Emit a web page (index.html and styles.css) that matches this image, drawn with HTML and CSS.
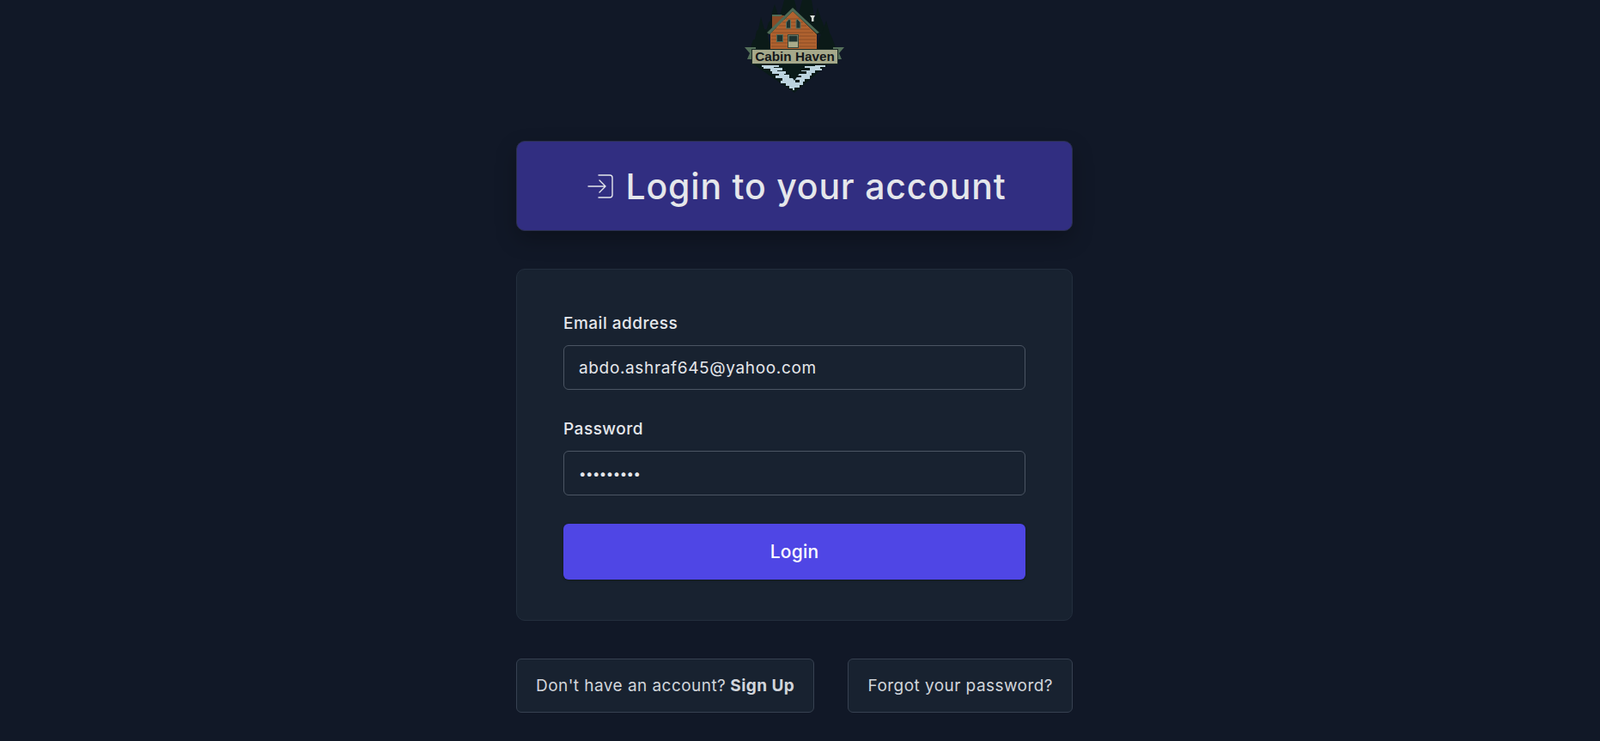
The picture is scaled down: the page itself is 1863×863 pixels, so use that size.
FILE: index.html
```html
<!DOCTYPE html>
<html lang="en">
<head>
    <meta charset="UTF-8">
    <meta name="viewport" content="width=device-width, initial-scale=1.0">
    <title>Login</title>
    <link rel="stylesheet" href="styles.css">
</head>
<body>
    <div class="page">
        <!-- Logo -->
        <svg class="logo" viewBox="0 0 120 108" role="img" aria-label="Cabin Haven logo">
            <!-- pine trees -->
            <g fill="#0b1a18">
                <path d="M8 58 L12 46 L14 46 L16 36 L18 34 L21 20 L25 34 L27 34 L30 46 L34 58 Z"/>
                <path d="M26 40 L30 26 L32 24 L34 14 L37 5 L40 14 L42 24 L46 40 Z"/>
                <path d="M40 30 L44 14 L46 8 L48 0 L60 0 L62 8 L64 30 Z"/>
                <path d="M64 30 L66 12 L69 0 L80 0 L82 12 L84 30 Z"/>
                <path d="M78 40 L82 24 L84 20 L87 9 L91 22 L93 26 L97 40 Z"/>
                <path d="M84 58 L90 42 L92 38 L97 24 L101 38 L103 42 L109 58 Z"/>
            </g>
            <!-- water diamond -->
            <path d="M11 74 L100 74 L60 108 Z" fill="#0a1a18"/>
            <g fill="#bcd3de">
                <path d="M22 76 H42 V78 H36 V79 H46 V82 H40 V83 H50 V86 H48 V87 H54 V91 H61 V96 H66 V93 H61 V90 H68 V88 H64 V86 H74 V83 H68 V82 H78 V79 H72 V77 H84 V76 H96 V78 H90 V80 H92 V82 H84 V85 H80 V88 H78 V92 H72 V95 H70 V99 H66 V102 H60 V105 H58 V103 H54 V100 H50 V97 H44 V94 H46 V91 H38 V88 H42 V86 H34 V83 H32 V80 H24 V78 H22 Z"/>
            </g>
            <path d="M47 75 H73 L60 94 Z" fill="#0a1a18"/>
            <!-- banner tails -->
            <path d="M2 55 H15 V69 H5 L8 62 Z M118 55 H105 V69 H115 L112 62 Z" fill="#55705a"/>
            <!-- cabin -->
            <path d="M34 18 H48 V32 H34 Z" fill="#8a4a26"/>
            <path d="M58 13 L86 40 V58 H32 V39 Z" fill="#b0622f"/>
            <g stroke="#8a4c27" stroke-width="1">
                <path d="M50 22 H66 M46 26 H70 M42 30 H74 M38 34 H78 M34 38 H82 M33 42 H85 M33 46 H85 M33 50 H85 M33 54 H85"/>
            </g>
            <path d="M34 17 H46 L44 19 H34 Z" fill="#4f6b57"/>
            <path d="M28 38 L58 9 L89 38 L86 39 L58 13 L31 40 Z" fill="#4f6b57"/>
            <path d="M50.5 33 V26 L54 22 L55.5 24 V33 Z M62 33 V24 L63 22 L67 26 V33 Z" fill="#1f3330" stroke="#5d7562"/>
            <rect x="39.5" y="40.5" width="7" height="8" fill="#1f3330" stroke="#4f6b57"/>
            <rect x="52.5" y="40.5" width="12" height="15" fill="#a9ab8a" stroke="#34493f"/>
            <rect x="53.5" y="41.5" width="10" height="7" fill="#1f3330"/>
            <path d="M78 18 H84 L82.5 21 V25 H80 V21 Z" fill="#d8dcd6"/>
            <!-- banner -->
            <rect x="10.5" y="57.5" width="100" height="17" fill="#a6a98b" stroke="#1b2a25"/>
            <text class="logo-text" x="60.5" y="71" text-anchor="middle">Cabin Haven</text>
        </svg>

        <h1 class="title">
            <svg class="title-icon" viewBox="0 0 30 30" fill="none" stroke="currentColor" stroke-width="1.4" stroke-linecap="round" stroke-linejoin="round">
                <path d="M1 15 H21 M14 8 L21 15 L14 22"/>
                <path d="M13 2 H26 Q29 2 29 5 V25 Q29 28 26 28 H13"/>
            </svg>
            <span>Login to your account</span>
        </h1>

        <form class="login-card">
            <div class="field">
                <label for="email">Email address</label>
                <input type="text" id="email" value="abdo.ashraf645@yahoo.com">
            </div>
            <div class="field field-last">
                <label for="password">Password</label>
                <input type="password" id="password" value="password1">
            </div>
            <button type="button" class="login-btn">Login</button>
        </form>

        <div class="links">
            <a href="#" class="link-box">Don't have an account? <strong>Sign Up</strong></a>
            <a href="#" class="link-box">Forgot your password?</a>
        </div>
    </div>
</body>
</html>
```

FILE: styles.css
```css
html, body {
    height: 100%;
    overflow: hidden;
}
body {
    margin: 0;
    padding-right: 13px;
    background-color: #111827;
    color: #e5e7eb;
    font-family: Inter, "Noto Sans", sans-serif;
}
.page {
    width: 648px;
    margin: 0 auto;
    display: flex;
    flex-direction: column;
}
.logo {
    display: block;
    width: 120px;
    height: 108px;
    align-self: center;
}
.logo-text {
    font-family: "Liberation Sans", Arial, sans-serif;
    font-weight: 700;
    font-size: 15.3px;
    fill: #14181a;
}
.title {
    margin: 56px 0 44px;
    height: 105px;
    box-sizing: border-box;
    padding-left: 5px;
    display: flex;
    align-items: center;
    justify-content: center;
    gap: 15px;
    background-color: #312e81;
    border: 1px solid #2b3050;
    border-radius: 10px;
    box-shadow: 0 10px 24px rgba(0,0,0,0.25);
    font-size: 41px;
    font-weight: 500;
    letter-spacing: 0.8px;
}
.title-icon {
    width: 30px;
    height: 30px;
}
.login-card {
    height: 410px;
    box-sizing: border-box;
    padding: 52px 54px 0;
    background-color: #182230;
    border: 1px solid #232e3d;
    border-radius: 10px;
}
.field {
    margin-bottom: 35px;
}
.field-last {
    margin-bottom: 33px;
}
.field label {
    display: block;
    margin-bottom: 14px;
    font-size: 19px;
    font-weight: 500;
    line-height: 22px;
    letter-spacing: 0.5px;
}
.field input {
    display: block;
    width: 100%;
    height: 52px;
    box-sizing: border-box;
    padding: 0 17px;
    background-color: #182230;
    border: 1px solid #4b5563;
    border-radius: 6px;
    color: #e5e7eb;
    font-family: inherit;
    font-size: 19px;
    letter-spacing: 0.65px;
}
.field #password {
    font-size: 15px;
    letter-spacing: -0.5px;
}
.login-btn {
    display: block;
    width: 100%;
    height: 65px;
    background-color: #4f46e5;
    border: none;
    border-radius: 6px;
    box-shadow: 0 1px 3px rgba(0,0,0,0.3);
    color: #fff;
    font-family: inherit;
    font-size: 21px;
    font-weight: 500;
    letter-spacing: 0.2px;
}
.links {
    margin-top: 44px;
    display: flex;
    justify-content: space-between;
}
.link-box {
    height: 63px;
    box-sizing: border-box;
    display: flex;
    align-items: center;
    gap: 5px;
    padding: 0 22px;
    background-color: #182230;
    border: 1px solid #374151;
    border-radius: 6px;
    color: #d1d5db;
    font-size: 19px;
    letter-spacing: 0.45px;
    text-decoration: none;
}
```
